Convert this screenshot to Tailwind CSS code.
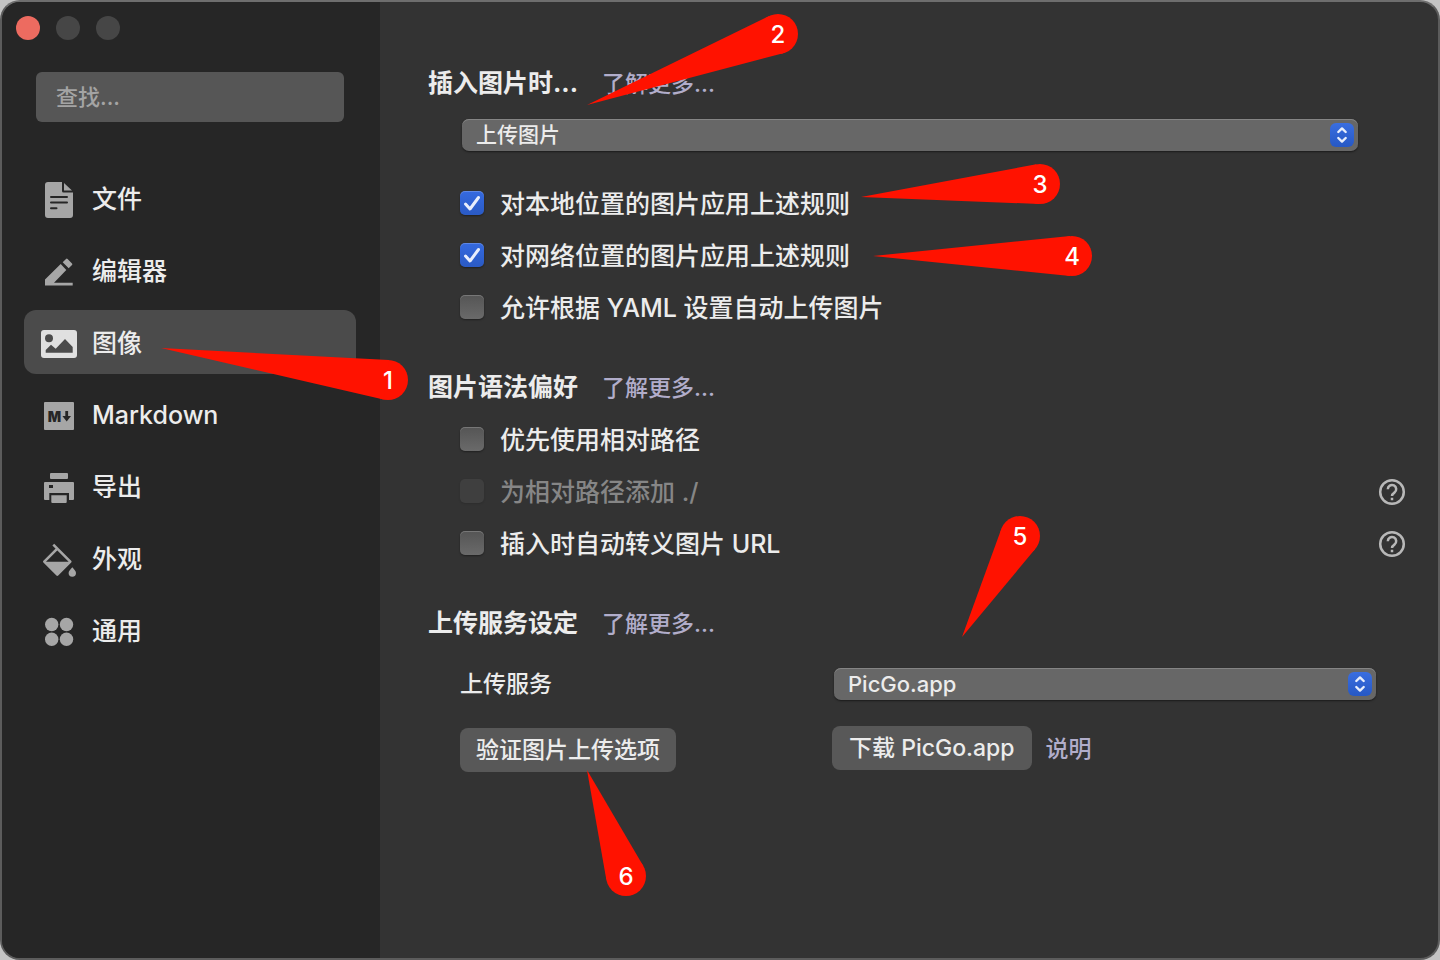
<!DOCTYPE html>
<html lang="zh-CN">
<head>
<meta charset="utf-8">
<meta name="viewport" content="width=device-width, initial-scale=1">
<title>偏好设置</title>
<script src="https://cdn.jsdelivr.net/npm/@tailwindcss/browser@4"></script>
</head>
<body class="bg-[#c4c4c4] font-['Inter','Noto_Sans_CJK_SC',sans-serif] text-[#ececec]">
<div class="relative flex min-h-screen overflow-hidden rounded-[20px] border-2 border-[#5c5c5c] border-t-[#6e6e6e] bg-[#333333]">

  <aside class="w-[378px] shrink-0 bg-[#262626] pt-[14px] pr-6 pl-[22px]">
    <div class="-ml-2 flex gap-4">
      <button aria-label="关闭" class="size-6 rounded-full bg-[#ed6b60]"></button>
      <button aria-label="最小化" class="size-6 rounded-full bg-[#464646]"></button>
      <button aria-label="缩放" class="size-6 rounded-full bg-[#464646]"></button>
    </div>
    <div class="mt-8 px-3">
      <input type="text" aria-label="查找" placeholder="查找..." class="h-[50px] w-full rounded-md bg-[#565656] px-5 text-[22px] font-medium text-[#ececec] outline-none placeholder:text-[#a4a4a4]">
    </div>
    <nav class="mt-11 flex flex-col gap-2 text-[25px] font-medium">
      <a href="#file" class="flex h-16 items-center gap-3 rounded-xl pt-1 pl-4">
        <svg class="size-10" viewBox="0 2 40 40" fill="#a6a6a6"><path d="M8 4H22V13a1.5 1.5 0 0 0 1.5 1.5H33V37a3 3 0 0 1-3 3H8a3 3 0 0 1-3-3V7a3 3 0 0 1 3-3Z"/><path d="M24 5L32 12.5H24Z"/><path d="M11 19H27M11 24.5H27M11 30.3H16.500" stroke="#262626" stroke-width="2" stroke-linecap="round"/></svg>
        文件</a>
      <a href="#editor" class="flex h-16 items-center gap-3 rounded-xl pt-1 pl-4">
        <svg class="size-10" viewBox="0 2 40 40" fill="#a6a6a6"><path d="M5 35.600V29.500L20.700 14L26.300 20L14 32.700H32.700V35.600Z"/><path d="M22.700 12.300L26 9q.8-.8 1.600 0L32 13.500q.8.8 0 1.600L28.700 18.300Z"/></svg>
        编辑器</a>
      <a href="#image" aria-current="page" class="flex h-16 items-center gap-3 rounded-xl bg-[#4b4b4b] pt-1 pl-4">
        <svg class="size-10" viewBox="0 2 40 40"><rect x="1" y="8" width="36" height="28" rx="3" fill="#e0e0e0"/><circle cx="9" cy="16.300" r="4" fill="#4b4b4b"/><path d="M5.700 30.700V28L11 22.700L15.700 26.700L25 17L32.700 25V30.700Z" fill="#4b4b4b"/></svg>
        图像</a>
      <a href="#markdown" class="flex h-16 items-center gap-3 rounded-xl pt-1 pl-4">
        <svg class="size-10" viewBox="0 2 40 40"><rect x="4" y="8" width="30" height="28" rx="1" fill="#a6a6a6"/><text x="14.500" y="27.500" text-anchor="middle" class="text-[14px] font-black" fill="#262626">M</text><path d="M25.300 17H28.100V22H31L26.700 27.500L22.400 22H25.300Z" fill="#262626"/></svg>
        Markdown</a>
      <a href="#export" class="flex h-16 items-center gap-3 rounded-xl pt-1 pl-4">
        <svg class="size-10" viewBox="0 2 40 40" fill="#a6a6a6"><rect x="10" y="7" width="18" height="6" rx="1"/><path fill-rule="evenodd" d="M5 16H33a1 1 0 0 1 1 1V33a1 1 0 0 1-1 1H29V27H9.300V34H5a1 1 0 0 1-1-1V17a1 1 0 0 1 1-1ZM9 19V22H13V19Z"/><path d="M11.300 29.300H26.700V36q0 1-1 1H12.300q-1 0-1-1Z"/></svg>
        导出</a>
      <a href="#appearance" class="flex h-16 items-center gap-3 rounded-xl pt-1 pl-4">
        <svg class="size-10" viewBox="0 2 40 40" fill="#a6a6a6"><path d="M13.300 6.700L17.300 10.700L30.300 23.700L17.300 36.700L4.300 23.700L17.300 10.700" fill="none" stroke="#a6a6a6" stroke-width="2.600" stroke-linejoin="round"/><path d="M4 23.700H30.600L17.300 37Z"/><path d="M32.300 29.300C34 31.500 36 33 36 35a3.700 3.700 0 0 1-7.400 0C28.600 33 30.600 31.500 32.300 29.300Z"/></svg>
        外观</a>
      <a href="#general" class="flex h-16 items-center gap-3 rounded-xl pt-1 pl-4">
        <svg class="size-10" viewBox="0 2 40 40" fill="#a6a6a6"><circle cx="11.700" cy="14.500" r="6.700"/><circle cx="26.500" cy="14.500" r="6.700"/><circle cx="11.700" cy="29.300" r="6.700"/><circle cx="26.500" cy="29.300" r="6.700"/></svg>
        通用</a>
    </nav>
  </aside>

  <main class="min-w-0 flex-1 pt-[66px] pr-8 pb-8 pl-12">
    <section>
      <div class="flex h-8 items-center gap-6">
        <h2 class="text-[25px] font-bold">插入图片时...</h2>
        <a href="#more-insert" class="text-[23px] font-medium text-[#b1adca]">了解更多...</a>
      </div>
      <div class="relative mt-[19px] mr-12 ml-[34px]">
        <select aria-label="插入图片时" class="block h-8 w-full appearance-none rounded-[7px] bg-[#676767] pl-[14px] text-[21px] leading-8 font-medium shadow-[0_1px_2px_#00000080,inset_0_1px_0_#858585]"><option>上传图片</option></select>
        <svg class="pointer-events-none absolute top-1 right-1 size-6 rounded-md bg-linear-to-b from-[#3a6ee0] to-[#2658c4]" viewBox="0 0 24 24" fill="none" stroke="#e8eefc" stroke-width="2.400" stroke-linecap="round" stroke-linejoin="round"><path d="M8.300 9L12 5.400L15.700 9M8.300 15L12 18.600L15.700 15"/></svg>
      </div>
      <div class="mt-[27px] ml-8 text-[25px] font-medium">
        <label class="flex h-[52px] items-center gap-4 pt-0.5">
          <span class="-mt-1 grid size-6 shrink-0"><input type="checkbox" checked class="peer col-start-1 row-start-1 size-6 appearance-none rounded-[5px] bg-linear-to-b from-[#555555] to-[#6a6a6a] shadow-[0_1px_2px_#00000066,inset_0_1px_0_#ffffff33] checked:from-[#356ae0] checked:to-[#2a5ac4]"><svg class="pointer-events-none invisible col-start-1 row-start-1 size-6 peer-checked:visible" viewBox="0 0 24 24" fill="none" stroke="#e8eefc" stroke-width="3" stroke-linecap="round" stroke-linejoin="round"><path d="M5.500 13L10 18L18.500 6.500"/></svg></span>
          对本地位置的图片应用上述规则</label>
        <label class="flex h-[52px] items-center gap-4 pt-0.5">
          <span class="-mt-1 grid size-6 shrink-0"><input type="checkbox" checked class="peer col-start-1 row-start-1 size-6 appearance-none rounded-[5px] bg-linear-to-b from-[#555555] to-[#6a6a6a] shadow-[0_1px_2px_#00000066,inset_0_1px_0_#ffffff33] checked:from-[#356ae0] checked:to-[#2a5ac4]"><svg class="pointer-events-none invisible col-start-1 row-start-1 size-6 peer-checked:visible" viewBox="0 0 24 24" fill="none" stroke="#e8eefc" stroke-width="3" stroke-linecap="round" stroke-linejoin="round"><path d="M5.500 13L10 18L18.500 6.500"/></svg></span>
          对网络位置的图片应用上述规则</label>
        <label class="flex h-[52px] items-center gap-4 pt-0.5">
          <input type="checkbox" class="-mt-1 size-6 shrink-0 appearance-none rounded-[5px] bg-linear-to-b from-[#555555] to-[#6a6a6a] shadow-[0_1px_2px_#00000066,inset_0_1px_0_#ffffff33]">
          允许根据 YAML 设置自动上传图片</label>
      </div>
    </section>

    <section class="mt-[38px]">
      <div class="flex h-8 items-center gap-6">
        <h2 class="text-[25px] font-bold">图片语法偏好</h2>
        <a href="#more-syntax" class="text-[23px] font-medium text-[#b1adca]">了解更多...</a>
      </div>
      <div class="mt-[10px] ml-8 text-[25px] font-medium">
        <label class="flex h-[52px] items-center gap-4 pt-0.5">
          <input type="checkbox" class="-mt-1 size-6 shrink-0 appearance-none rounded-[5px] bg-linear-to-b from-[#555555] to-[#6a6a6a] shadow-[0_1px_2px_#00000066,inset_0_1px_0_#ffffff33]">
          优先使用相对路径</label>
        <div class="flex h-[52px] items-center justify-between">
          <label class="flex items-center gap-4 pt-0.5 text-[#868686]">
            <input type="checkbox" disabled class="-mt-1 size-6 shrink-0 appearance-none rounded-[5px] bg-[#3f3f3f] shadow-[0_1px_2px_#00000022]">
            为相对路径添加 ./</label>
          <button aria-label="帮助"><svg class="size-7" viewBox="0 0 28 28" fill="none" stroke="#b8b8b8" stroke-width="2.500"><circle cx="14" cy="14" r="11.800"/><path d="M9.800 11.200a4.200 4.200 0 1 1 6.600 3.400C14.800 15.700 14 16.300 14 18.100M14 19.700V22.200"/></svg></button>
        </div>
        <div class="flex h-[52px] items-center justify-between">
          <label class="flex items-center gap-4 pt-0.5">
            <input type="checkbox" class="-mt-1 size-6 shrink-0 appearance-none rounded-[5px] bg-linear-to-b from-[#555555] to-[#6a6a6a] shadow-[0_1px_2px_#00000066,inset_0_1px_0_#ffffff33]">
            插入时自动转义图片 URL</label>
          <button aria-label="帮助"><svg class="size-7" viewBox="0 0 28 28" fill="none" stroke="#b8b8b8" stroke-width="2.500"><circle cx="14" cy="14" r="11.800"/><path d="M9.800 11.200a4.200 4.200 0 1 1 6.600 3.400C14.800 15.700 14 16.300 14 18.100M14 19.700V22.200"/></svg></button>
        </div>
      </div>
    </section>

    <section class="mt-[38px]">
      <div class="flex h-8 items-center gap-6">
        <h2 class="text-[25px] font-bold">上传服务设定</h2>
        <a href="#more-upload" class="text-[23px] font-medium text-[#b1adca]">了解更多...</a>
      </div>
      <div class="mt-7 mr-[30px] ml-8 grid grid-cols-[372px_1fr] gap-y-[26px] text-[23px] font-medium">
        <label for="service" class="leading-8">上传服务</label>
        <div class="relative ml-0.5">
          <select id="service" class="block h-8 w-full appearance-none rounded-[7px] bg-[#676767] pl-[14px] text-[22px] leading-8 font-medium shadow-[0_1px_2px_#00000080,inset_0_1px_0_#858585]"><option>PicGo.app</option></select>
          <svg class="pointer-events-none absolute top-1 right-1 size-6 rounded-md bg-linear-to-b from-[#3a6ee0] to-[#2658c4]" viewBox="0 0 24 24" fill="none" stroke="#e8eefc" stroke-width="2.400" stroke-linecap="round" stroke-linejoin="round"><path d="M8.300 9L12 5.400L15.700 9M8.300 15L12 18.600L15.700 15"/></svg>
        </div>
        <div class="pt-0.5"><button class="h-11 rounded-lg bg-[#585858] px-4">验证图片上传选项</button></div>
        <div class="flex items-start gap-[14px]">
          <button class="h-11 rounded-lg bg-[#585858] px-[17px]">下载 PicGo.app</button>
          <a href="#help" class="leading-[46px] text-[#b1adca]">说明</a>
        </div>
      </div>
    </section>
  </main>
</div>

<!-- Numbered step markers -->
<svg class="pointer-events-none absolute top-0 left-0 size-full overflow-visible text-[24px] font-medium" fill="#ff1200">
  <circle cx="388" cy="380" r="20"/><path d="M161 348L389.100 360L383.500 399.500Z"/>
  <circle cx="778" cy="34" r="20"/><path d="M587 105L769.200 16L783.100 53.300Z"/>
  <circle cx="1040" cy="184" r="20"/><path d="M861 197L1036.300 164.300L1039.200 204Z"/>
  <circle cx="1072" cy="256" r="20"/><path d="M873 256L1070 236.100V275.900Z"/>
  <circle cx="1020" cy="536" r="20"/><path d="M962 637L1001.200 529.200L1035.400 548.800Z"/>
  <circle cx="626" cy="876" r="20"/><path d="M587 770L643.300 865.900L606.300 879.500Z"/>
  <g fill="#ffffff" text-anchor="middle">
    <text x="388" y="389">1</text>
    <text x="778" y="43">2</text>
    <text x="1040" y="193">3</text>
    <text x="1072" y="265">4</text>
    <text x="1020" y="545">5</text>
    <text x="626" y="885">6</text>
  </g>
</svg>
</body>
</html>
